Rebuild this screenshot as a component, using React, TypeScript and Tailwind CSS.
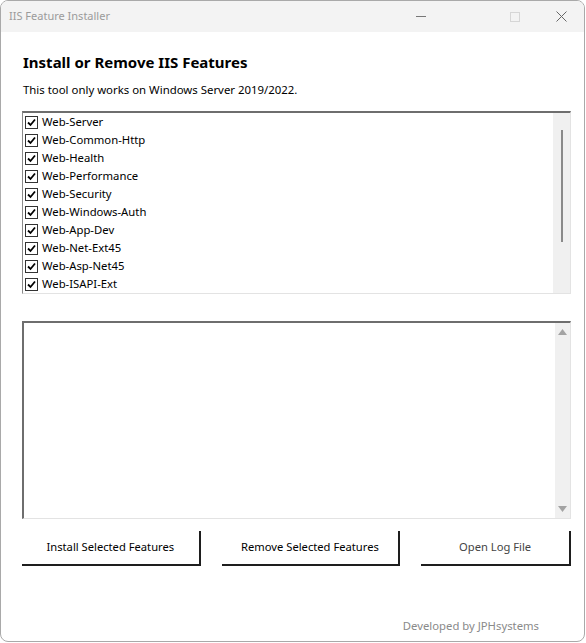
import { useState } from "react";

const FEATURES = [
  "Web-Server",
  "Web-Common-Http",
  "Web-Health",
  "Web-Performance",
  "Web-Security",
  "Web-Windows-Auth",
  "Web-App-Dev",
  "Web-Net-Ext45",
  "Web-Asp-Net45",
  "Web-ISAPI-Ext",
];

const CheckBox = ({ checked, onClick }: { checked: boolean; onClick: () => void }) => (
  <button
    onClick={onClick}
    className="w-[13px] h-[13px] border border-[#333] bg-white flex items-center justify-center shrink-0"
  >
    {checked && (
      <svg width="9" height="9" viewBox="0 0 9 9">
        <path d="M1 4.5 L3.5 7 L8 1.5" stroke="#000" strokeWidth="1.8" fill="none" />
      </svg>
    )}
  </button>
);

const App = () => {
  const [checked, setChecked] = useState<boolean[]>(FEATURES.map(() => true));

  const toggle = (i: number) => {
    setChecked((prev) => prev.map((c, j) => (j === i ? !c : c)));
  };

  return (
    <div
      className="w-[586px] h-[643px] bg-white"
      style={{ fontFamily: '"Noto Sans", "Open Sans", sans-serif' }}
    >
      <div className="w-[585px] h-[642px] border border-[#a9a9a9] rounded-lg overflow-hidden flex flex-col bg-white">
        {/* title bar */}
        <div className="h-[31px] bg-[#f3f3f3] flex items-center shrink-0">
          <span className="pl-2 text-[11px] text-[#9b9b9b]">IIS Feature Installer</span>
          <div className="ml-auto flex items-center h-full">
            <div className="w-[46px] flex justify-center">
              <div className="w-[10px] h-px bg-[#777]" />
            </div>
            <div className="w-[46px] ml-[48px] flex justify-center">
              <div className="w-[10px] h-[10px] border border-[#d6d6d6]" />
            </div>
            <div className="w-[46px] flex justify-center">
              <svg width="11" height="11" viewBox="0 0 11 11">
                <path d="M0.5 0.5 L10.5 10.5 M10.5 0.5 L0.5 10.5" stroke="#666" strokeWidth="1" />
              </svg>
            </div>
          </div>
        </div>

        {/* content */}
        <div className="flex flex-col pl-[21px] pr-[13px] pt-[20px] flex-1">
          <h1 className="pl-px text-[15px] leading-[20px] font-bold text-black">
            Install or Remove IIS Features
          </h1>
          <p className="pl-px mt-[10px] text-[11.4px] leading-[16px] text-black">
            This tool only works on Windows Server 2019/2022.
          </p>

          {/* feature list */}
          <div className="mt-[13px] h-[183px] w-[549px] border-t-2 border-l border-t-[#6e6e6e] border-l-[#8a8a8a] border-b border-r border-b-[#e3e3e3] border-r-[#e3e3e3] flex">
            <div className="flex-1 flex flex-col">
              {FEATURES.map((f, i) => (
                <div key={f} className="h-[18px] flex items-center pl-[2px] gap-[4px]">
                  <CheckBox checked={checked[i]} onClick={() => toggle(i)} />
                  <span className="text-[11.3px] leading-[16px] text-black">{f}</span>
                </div>
              ))}
            </div>
            <div className="w-[17px] bg-[#f0f0f0] flex justify-center pt-[17px]">
              <div className="w-[2px] h-[112px] bg-[#8a8a8a]" />
            </div>
          </div>

          {/* log box */}
          <div className="mt-[27px] h-[198px] w-[549px] border-t-2 border-l-2 border-t-[#6e6e6e] border-l-[#6e6e6e] border-b border-r border-b-[#e3e3e3] border-r-[#e3e3e3] flex">
            <div className="flex-1" />
            <div className="w-[15px] bg-[#f0f0f0] flex flex-col items-center justify-between py-[6px]">
              <svg width="9" height="6" viewBox="0 0 9 6">
                <path d="M0 6 L4.5 0 L9 6 Z" fill="#a3a3a3" />
              </svg>
              <svg width="9" height="6" viewBox="0 0 9 6">
                <path d="M0 0 L4.5 6 L9 0 Z" fill="#a3a3a3" />
              </svg>
            </div>
          </div>

          {/* buttons */}
          <div className="mt-[12px] flex gap-[21px] w-[549px]">
            <button className="w-[179px] h-[35px] bg-white border-r-2 border-b-2 border-[#1e1e1e] text-[11.2px] text-black">
              Install Selected Features
            </button>
            <button className="w-[179px] h-[35px] bg-white border-r-2 border-b-2 border-[#1e1e1e] text-[11.2px] text-black">
              Remove Selected Features
            </button>
            <button className="w-[150px] h-[35px] bg-white border-r-2 border-b-2 border-[#1e1e1e] text-[11.2px] text-[#444]">
              Open Log File
            </button>
          </div>

          <div className="mt-auto mb-[6px] flex justify-end pr-[32px]">
            <span className="text-[11.3px] text-[#8a8a8a]">Developed by JPHsystems</span>
          </div>
        </div>
      </div>
    </div>
  );
};

export default App;
